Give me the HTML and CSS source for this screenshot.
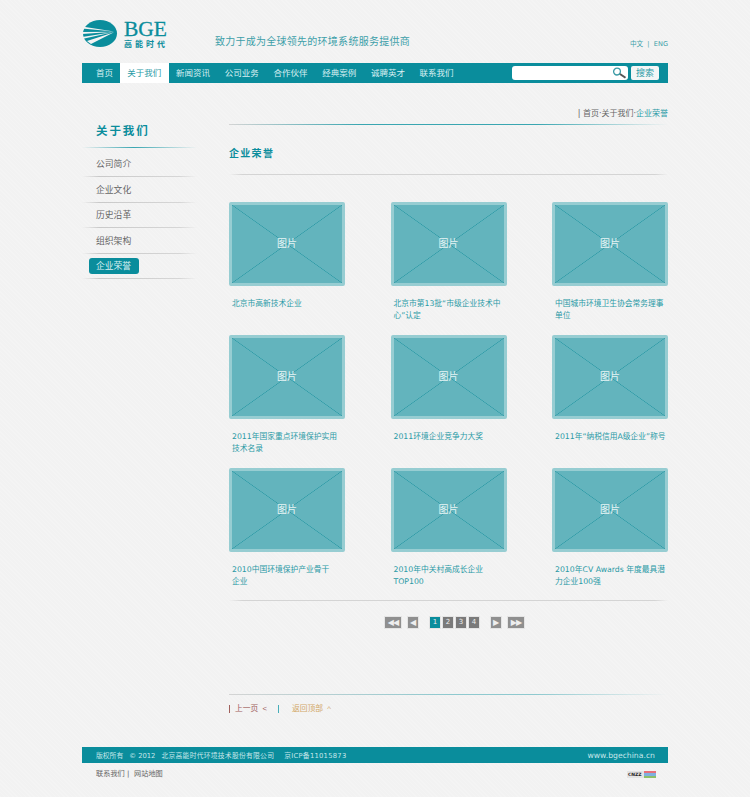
FILE: index.html
```html
<!DOCTYPE html>
<html lang="zh-CN">
	<head>
		<meta charset="UTF-8">
		<meta name="viewport" content="width=device-width, initial-scale=1.0">
		<title>企业荣誉</title>
		<link rel="stylesheet" href="styles.css">
	</head>
	<body>
		<div class="wrap">
			<!-- 头部 -->
			<div class="header">
				<div class="logo">
					<svg class="logo-mark" width="36" height="30" viewBox="0 0 36 30">
						<ellipse cx="18" cy="14.5" rx="17" ry="13.5" fill="#0a8d9c"/>
						<path d="M0 7.5 L32 12.5 L0 9.5Z M0 13 L32 12.8 L0 15Z M0 18 L32 13 L0 20Z M5 22 L32 13.2 L9 25Z" fill="#f3f3f3"/>
					</svg>
					<div class="logo-text">
						<div class="logo-en">BGE</div>
						<div class="logo-cn">高能时代</div>
					</div>
				</div>
				<div class="slogan">致力于成为全球领先的环境系统服务提供商</div>
				<div class="lang">中文 &nbsp;|&nbsp; ENG</div>
			</div>

			<!-- 导航 -->
			<div class="nav">
				<a class="nav-first">首页</a>
				<a class="active">关于我们</a>
				<a>新闻资讯</a>
				<a>公司业务</a>
				<a>合作伙伴</a>
				<a>经典案例</a>
				<a>诚聘英才</a>
				<a>联系我们</a>
				<div class="search">
					<div class="search-box">
						<svg width="15" height="12" viewBox="0 0 15 12">
							<circle cx="5" cy="4.6" r="3.4" fill="none" stroke="#3a9aa5" stroke-width="1.3"/>
							<path d="M8 7 L13.5 10.8" stroke="#555" stroke-width="2"/>
						</svg>
					</div>
					<button class="search-btn">搜索</button>
				</div>
			</div>

			<div class="content">
				<!-- 左侧菜单 -->
				<div class="side">
					<h2>关于我们</h2>
					<ul>
						<li>公司简介</li>
						<li>企业文化</li>
						<li>历史沿革</li>
						<li>组织架构</li>
						<li><span class="pill">企业荣誉</span></li>
					</ul>
				</div>

				<!-- 主体 -->
				<div class="main">
					<div class="crumb">| 首页·关于我们·<span>企业荣誉</span></div>
					<div class="title">企业荣誉</div>
					<div class="grid">
						<div class="card"><div class="pic">图片</div><p>北京市高新技术企业</p></div>
						<div class="card"><div class="pic">图片</div><p>北京市第13批“市级企业技术中<br>心”认定</p></div>
						<div class="card"><div class="pic">图片</div><p>中国城市环境卫生协会常务理事<br>单位</p></div>
						<div class="card"><div class="pic">图片</div><p>2011年国家重点环境保护实用<br>技术名录</p></div>
						<div class="card"><div class="pic">图片</div><p>2011环境企业竞争力大奖</p></div>
						<div class="card"><div class="pic">图片</div><p>2011年“纳税信用A级企业”称号</p></div>
						<div class="card"><div class="pic">图片</div><p>2010中国环境保护产业骨干<br>企业</p></div>
						<div class="card"><div class="pic">图片</div><p>2010年中关村高成长企业<br>TOP100</p></div>
						<div class="card"><div class="pic">图片</div><p>2010年CV Awards 年度最具潜<br>力企业100强</p></div>
					</div>
					<div class="pager">
						<a class="pg-wide">◀◀</a>
						<a class="pg-arrow">◀</a>
						<span class="pg-nums">
							<a class="pg-on">1</a>
							<a>2</a>
							<a>3</a>
							<a>4</a>
						</span>
						<a class="pg-arrow">▶</a>
						<a class="pg-wide">▶▶</a>
					</div>
					<div class="back">
						<span class="back-prev">上一页 &nbsp;&lt;</span>
						<span class="back-top">返回顶部 &nbsp;^</span>
					</div>
				</div>
			</div>

			<!-- 底部 -->
			<div class="footer">
				<div class="copy">
					<span class="copy-label">版权所有</span>
					<span class="copy-year">© 2012</span>
					<span>北京高能时代环境技术股份有限公司</span>
					<span class="icp">京ICP备11015873</span>
				</div>
				<span class="site">www.bgechina.cn</span>
			</div>
			<div class="sub-footer">
				<span>联系我们 | &nbsp;网站地图</span>
				<div class="cnzz">
					<b>CNZZ</b>
					<i></i>
				</div>
			</div>
		</div>
	</body>
</html>
```

FILE: styles.css
```css
html,
body {
	margin: 0;
	height: 100%;
	overflow: hidden;
}

body {
	font-family: "DejaVu Sans", "Noto Sans CJK SC", sans-serif;
	color: #666;
	background-color: #f3f3f3;
	background-image: repeating-linear-gradient(45deg, #f4f4f4 0 1px, #f2f2f2 1px 3px);
}

.wrap {
	width: 586px;
	margin: 0 auto;
}

/* 头部 */
.header {
	height: 63px;
	display: flex;
}

.logo {
	width: 133px;
	display: flex;
	padding-top: 19px;
	box-sizing: border-box;
}

.logo-mark {
	flex: none;
}

.logo-text {
	margin-left: 6px;
	color: #0a8d9c;
}

.logo-en {
	font-family: "Liberation Serif", serif;
	font-size: 21.5px;
	line-height: 21px;
	height: 21px;
	-webkit-text-stroke: 0.3px #0a8d9c;
}

.logo-cn {
	font-size: 8px;
	font-weight: bold;
	letter-spacing: 3px;
	line-height: 9px;
	white-space: nowrap;
}

.slogan {
	font-size: 10px;
	letter-spacing: 0.26px;
	line-height: 14px;
	color: #3d9fa9;
	padding-top: 35px;
}

.lang {
	margin-left: auto;
	font-size: 6.6px;
	line-height: 10px;
	padding-top: 39px;
	color: #3d9fa9;
}

/* 导航 */
.nav {
	height: 20px;
	background: #0a8d9c;
	display: flex;
	align-items: center;
	font-size: 8.5px;
	color: #d8f0f2;
}

.nav a {
	height: 20px;
	line-height: 20px;
	padding: 0 7.35px;
}

.nav .nav-first {
	padding: 0 7px 0 14px;
}

.nav .active {
	background: #fff;
	color: #2a9aa6;
}

.search {
	margin-left: auto;
	margin-right: 9px;
	display: flex;
	gap: 3px;
}

.search-box {
	width: 116px;
	height: 14px;
	background: #fff;
	border-radius: 3px;
	display: flex;
	justify-content: flex-end;
	align-items: center;
	padding-right: 1px;
	box-sizing: border-box;
}

.search-btn {
	width: 28px;
	height: 14px;
	padding: 0;
	border: 0;
	border-radius: 2px;
	background: #f4f6f6;
	font-family: inherit;
	font-size: 9px;
	line-height: 14px;
	color: #2a9aa6;
}

.content {
	display: flex;
}

/* 左侧菜单 */
.side {
	width: 115px;
	margin-right: 32px;
	flex: none;
	padding-top: 41px;
}

.side h2 {
	margin: 0;
	height: 24px;
	padding-left: 14px;
	font-size: 11.5px;
	line-height: 14px;
	letter-spacing: 1.9px;
	color: #0a8d9c;
	background: linear-gradient(90deg, transparent, #3aa6b1 45%, transparent) no-repeat left bottom / 100% 1px;
}

.side ul {
	margin: 0;
	padding: 3.5px 0 0;
	list-style: none;
}

.side li {
	height: 25.5px;
	box-sizing: border-box;
	padding: 6.5px 0 0 14px;
	font-size: 8.8px;
	line-height: 13px;
	background: linear-gradient(90deg, transparent, #c9c9c9 15%, #d6d6d6 85%, transparent) no-repeat left bottom / 100% 1px;
}

.side .pill {
	display: block;
	height: 16px;
	width: 50px;
	margin: -2px 0 0 -7.5px;
	line-height: 16px;
	border-radius: 3px;
	text-align: center;
	background: #0a8d9c;
	color: #d8f0f2;
}

/* 主体 */
.main {
	width: 439px;
}

.crumb {
	height: 42px;
	box-sizing: border-box;
	padding-top: 25px;
	text-align: right;
	font-size: 8px;
	line-height: 11px;
	background: linear-gradient(90deg, #d4d4d4, #3aa6b1 30%, #3aa6b1 70%, transparent) no-repeat left bottom / 100% 1px;
}

.crumb span {
	color: #2a9aa6;
}

.title {
	height: 50px;
	box-sizing: border-box;
	padding-top: 22px;
	font-size: 10px;
	font-weight: bold;
	letter-spacing: 1.3px;
	line-height: 14px;
	color: #0a8d9c;
	background: linear-gradient(90deg, transparent, #d4d4d4 3%, #d4d4d4 97%, transparent) no-repeat left bottom / 100% 1px;
}

.grid {
	padding: 27px 0 0;
	display: grid;
	grid-template-columns: repeat(3, 116px);
	grid-auto-rows: 133px;
	justify-content: space-between;
	background: linear-gradient(90deg, transparent, #d4d4d4 3%, #d4d4d4 97%, transparent) no-repeat left bottom / 100% 1px;
}

.pic {
	height: 84px;
	box-sizing: border-box;
	border: 3px solid #97cdd2;
	border-radius: 2px;
	padding-bottom: 4px;
	display: flex;
	align-items: center;
	justify-content: center;
	font-size: 10px;
	color: #e6f4f5;
	background-color: #63b4bd;
	background-image:
		linear-gradient(to top right, transparent calc(50% - 0.6px), #2f9ba7 50%, transparent calc(50% + 0.6px)),
		linear-gradient(to bottom right, transparent calc(50% - 0.6px), #2f9ba7 50%, transparent calc(50% + 0.6px));
}

.card p {
	margin: 0;
	padding: 12px 0 0 3px;
	font-size: 7.75px;
	line-height: 12px;
	white-space: nowrap;
	color: #2a9aa6;
}

/* 翻页 */
.pager {
	height: 94px;
	box-sizing: border-box;
	padding: 16px 0 0 12px;
	display: flex;
	justify-content: center;
	gap: 7px;
	background: linear-gradient(90deg, #d4d4d4, #8fc9cf 50%, #8fc9cf 70%, transparent) no-repeat left bottom / 100% 1px;
}

.pager a {
	display: block;
	height: 11px;
	line-height: 11px;
	background: #8f8f8f;
	color: #eee;
	font-size: 8px;
	text-align: center;
	box-shadow: 0 0 0 1px #e4e4e4;
}

.pager .pg-wide {
	width: 16px;
	letter-spacing: -1px;
}

.pager .pg-arrow {
	width: 10px;
}

.pg-nums {
	display: flex;
	gap: 3px;
	margin: 0 5px;
}

.pager .pg-nums a {
	width: 10px;
	background: #7a7a7a;
	font-size: 7px;
}

.pager .pg-nums .pg-on {
	background: #0a8d9c;
}

/* 上一页 */
.back {
	height: 52px;
	padding-top: 10px;
	box-sizing: border-box;
	display: flex;
	font-family: "Liberation Sans", "Noto Sans CJK SC", sans-serif;
	font-size: 7.75px;
}

.back-prev {
	width: 49px;
	box-sizing: border-box;
	padding-left: 5px;
	color: #a0605c;
	border-left: 1px solid #a0605c;
	height: 8px;
	line-height: 8px;
}

.back-top {
	padding-left: 13px;
	color: #d2a868;
	border-left: 1px solid #47aeb9;
	height: 8px;
	line-height: 8px;
}

/* 底部 */
.footer {
	height: 16px;
	padding: 0 13px 0 14px;
	display: flex;
	justify-content: space-between;
	align-items: center;
	background: #0a8d9c;
	color: #c5e6ea;
	font-size: 6.8px;
	letter-spacing: 0.25px;
}

.copy {
	display: flex;
	align-items: baseline;
	gap: 6px;
}

.copy-label,
.copy-year {
	letter-spacing: 0;
}

.copy .icp {
	margin-left: 4px;
}

.site {
	font-size: 7.7px;
	letter-spacing: 0;
}

.sub-footer {
	display: flex;
	justify-content: space-between;
	align-items: center;
	padding: 5px 12px 0 14px;
	font-size: 7.2px;
	line-height: 12px;
}

.cnzz {
	display: flex;
	align-items: center;
	height: 7px;
	width: 29px;
	background: #e4e4e4;
}

.cnzz b {
	font-size: 4.5px;
	color: #222;
	width: 17px;
	padding-left: 1px;
	box-sizing: border-box;
	line-height: 7px;
}

.cnzz i {
	width: 12px;
	height: 7px;
	background: linear-gradient(#e8707a 0 2px, #7fb0e0 2px 5px, #8cc06a 5px 7px);
}
```
